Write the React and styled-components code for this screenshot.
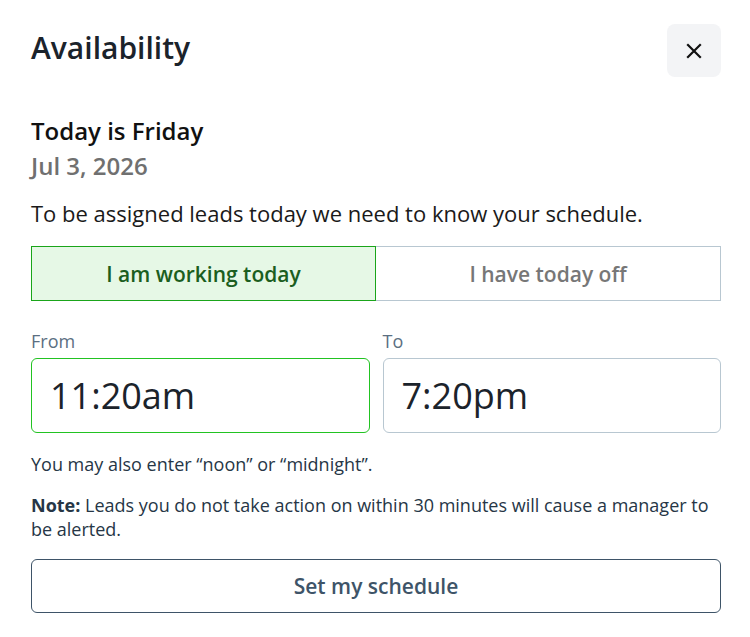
import React, { useEffect, useRef, useState } from "react";
import styled, { createGlobalStyle } from "styled-components";

const Global = createGlobalStyle`
  * { box-sizing: border-box; }
  body {
    margin: 0;
    background: #ffffff;
    font-family: "Open Sans", "Noto Sans", sans-serif;
  }
`;

const Panel = styled.div`
  width: 750px;
  padding: 24px 29px 24px 31px;
  display: flex;
  flex-direction: column;
`;

const Header = styled.div`
  display: flex;
  align-items: flex-start;
  justify-content: space-between;
`;

const Title = styled.h1`
  margin: 0;
  font-size: 30px;
  font-weight: 600;
  color: #1b232b;
  line-height: 48px;
`;

const CloseButton = styled.button`
  width: 54px;
  height: 53px;
  border: none;
  border-radius: 8px;
  background: #f3f4f6;
  display: flex;
  align-items: center;
  justify-content: center;
  padding: 0;
  cursor: pointer;
`;

const DayTitle = styled.div`
  margin-top: 36px;
  font-size: 24px;
  font-weight: 600;
  color: #111111;
  line-height: 35px;
`;

const DateLine = styled.div`
  font-size: 24px;
  font-weight: 600;
  color: #707070;
  line-height: 35px;
`;

const Lead = styled.p`
  margin: 15px 0 0;
  font-size: 22px;
  color: #1a1a1a;
  line-height: 30px;
`;

const Toggle = styled.div`
  margin-top: 18px;
  display: grid;
  grid-template-columns: 345px 1fr;
  height: 55px;
`;

const ToggleOption = styled.button`
  font-family: inherit;
  font-size: 21px;
  font-weight: 600;
  cursor: pointer;
  border: 1px solid ${(p) => (p.$active ? "#1aa51a" : "#b8c7d1")};
  border-left-width: ${(p) => (p.$active ? "1px" : "0")};
  background: ${(p) => (p.$active ? "#e6f8e6" : "#ffffff")};
  color: ${(p) => (p.$active ? "#1b5e20" : "#777777")};
  padding: 0;
`;

const Fields = styled.div`
  margin-top: 28px;
  display: grid;
  grid-template-columns: 1fr 1fr;
  column-gap: 13px;
`;

const Field = styled.label`
  display: flex;
  flex-direction: column;
`;

const FieldLabel = styled.span`
  font-size: 18px;
  color: #5b6f82;
  line-height: 24px;
  margin-bottom: 5px;
`;

const TimeInput = styled.input`
  height: 75px;
  width: 100%;
  border-radius: 6px;
  border: 1px solid ${(p) => (p.$focused ? "#22c322" : "#b8c7d1")};
  padding: 0 18px;
  font-family: "Open Sans", sans-serif;
  font-size: 36px;
  color: #1b232b;
  caret-color: #1b232b;
  outline: none;
  background: #fff;
`;

const Hint = styled.p`
  margin: 18px 0 0;
  font-size: 18px;
  color: #263646;
  line-height: 26px;
`;

const Note = styled.p`
  margin: 16px 0 0;
  font-size: 18px;
  color: #263646;
  line-height: 24px;
  b { font-weight: 700; }
`;

const SubmitButton = styled.button`
  margin-top: 18px;
  height: 54px;
  width: 100%;
  border: 1px solid #3e5468;
  border-radius: 6px;
  background: #fff;
  font-family: inherit;
  font-size: 21px;
  font-weight: 600;
  color: #3e5468;
  cursor: pointer;
`;

export default function App() {
  const [working, setWorking] = useState(true);
  const fromRef = useRef(null);

  useEffect(() => {
    const el = fromRef.current;
    if (el) {
      el.focus();
      el.setSelectionRange(0, 0);
    }
  }, []);

  return (
    <Panel>
      <Global />
      <Header>
        <Title>Availability</Title>
        <CloseButton aria-label="Close">
          <svg width="16" height="16" viewBox="0 0 16 16">
            <path d="M2 2 L14 14 M14 2 L2 14" stroke="#111" strokeWidth="2.2" strokeLinecap="square" />
          </svg>
        </CloseButton>
      </Header>
      <DayTitle>Today is Friday</DayTitle>
      <DateLine>Jul 3, 2026</DateLine>
      <Lead>To be assigned leads today we need to know your schedule.</Lead>
      <Toggle>
        <ToggleOption $active={working} onClick={() => setWorking(true)}>I am working today</ToggleOption>
        <ToggleOption $active={!working} onClick={() => setWorking(false)}>I have today off</ToggleOption>
      </Toggle>
      <Fields>
        <Field>
          <FieldLabel>From</FieldLabel>
          <TimeInput ref={fromRef} $focused defaultValue="11:20am" />
        </Field>
        <Field>
          <FieldLabel>To</FieldLabel>
          <TimeInput defaultValue="7:20pm" />
        </Field>
      </Fields>
      <Hint>You may also enter “noon” or “midnight”.</Hint>
      <Note><b>Note:</b> Leads you do not take action on within 30 minutes will cause a manager to be alerted.</Note>
      <SubmitButton>Set my schedule</SubmitButton>
    </Panel>
  );
}
